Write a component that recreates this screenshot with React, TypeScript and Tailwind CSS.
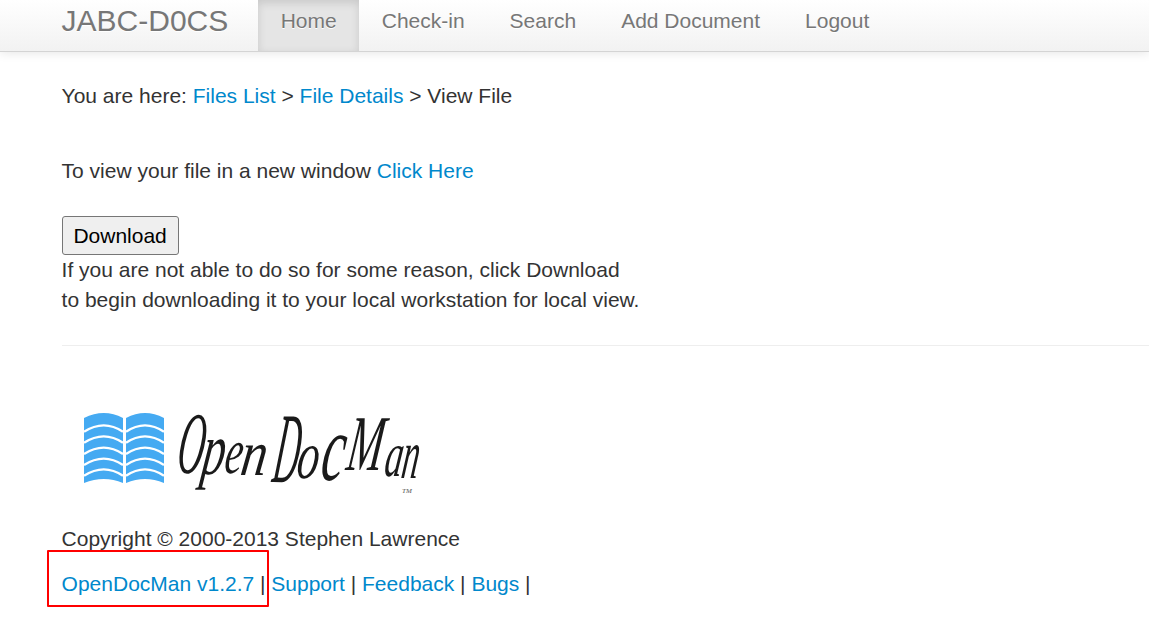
const letters: [string, number, number, number, number][] = [
  ["O", 113, 69, 0.37, 0.88],
  ["p", 138, 70, 0.46, 0.74],
  ["e", 161, 69, 0.4, 0.64],
  ["n", 177, 71, 0.52, 0.64],
  ["D", 209, 78, 0.35, 1.0],
  ["o", 233, 74, 0.44, 0.68],
  ["c", 257, 76, 0.52, 0.95],
  ["M", 283, 66, 0.43, 0.79],
  ["a", 321, 72, 0.36, 0.64],
  ["n", 338, 74, 0.34, 0.7],
];

export default function App() {
  const link = "text-[#0088cc]";
  const navItem = "px-[22.5px] leading-[42px] text-[#777777] [text-shadow:0_1px_0_#ffffff]";
  return (
    <div className="relative min-h-[619px] overflow-hidden bg-white font-['Liberation_Sans',Arial,sans-serif] text-[21px] leading-[29px] text-[#333333]">
      <nav className="flex h-[52px] border-b border-[#d4d4d4] bg-gradient-to-b from-white to-[#f2f2f2] pl-[61.6px] shadow-[0_1px_10px_rgba(0,0,0,0.1)]">
        <div className="mr-[29.9px] text-[30px] leading-[42px] text-[#777777] [text-shadow:0_1px_0_#ffffff]">JABC-D0CS</div>
        <div className={navItem + " h-[51px] bg-[#e5e5e5] text-[#555555] shadow-[inset_0_3px_8px_rgba(0,0,0,0.125)]"}>Home</div>
        <div className={navItem}>Check-in</div>
        <div className={navItem}>Search</div>
        <div className={navItem}>Add Document</div>
        <div className={navItem}>Logout</div>
      </nav>
      <main className="pl-[61.6px]">
        <p className="mt-[29px]">
          You are here: <a className={link}>Files List</a> &gt; <a className={link}>File Details</a> &gt; View File
        </p>
        <p className="mt-[46px]">
          To view your file in a new window <a className={link}>Click Here</a>
        </p>
        <button className="mt-[31px] block h-[39px] w-[117px] rounded-[3px] border border-[#767676] bg-[#efefef] text-[21px] leading-none text-black">
          Download
        </button>
        <p className="mt-0 leading-[30px]">
          If you are not able to do so for some reason, click Download
          <br />
          to begin downloading it to your local workstation for local view.
        </p>
        <hr className="mt-[30px] border-0 border-t border-[#eeeeee]" />
        <svg className="mt-[58px] block" width="370" height="106" viewBox="0 0 370 106">
          <path d="M22 14 Q42 4 61 14 L61 79 Q42 71 22 79 Z" fill="#45aaf2" />
          <path d="M64 14 Q83 4 102 14 L102 79 Q83 71 64 79 Z" fill="#45aaf2" />
          <g fill="none" stroke="#ffffff" strokeWidth="2.4">
            <path d="M22 27.7 Q42 15 61 27.7M22 38.7 Q42 26 61 38.7M22 50 Q42 37.3 61 50M22 61 Q42 48.3 61 61M22 71.7 Q42 59 61 71.7" />
            <path d="M64 27.7 Q83 15 102 27.7M64 38.7 Q83 26 102 38.7M64 50 Q83 37.3 102 50M64 61 Q83 48.3 102 61M64 71.7 Q83 59 102 71.7" />
          </g>
          <g fontFamily="'Liberation Serif',serif" fontStyle="italic" fontSize="100" fill="#1a1a1a">
            {letters.map(([ch, x, y, sx, sy], i) => (
              <text key={i} transform={`translate(${x} ${y}) skewX(-8) scale(${sx} ${sy})`}>{ch}</text>
            ))}
          </g>
          <text x="340" y="89" fontFamily="'Liberation Serif',serif" fontStyle="italic" fontSize="7" fill="#555555">TM</text>
        </svg>
        <p className="mt-[14px]">Copyright © 2000-2013 Stephen Lawrence</p>
        <p className="mt-[16px]">
          <a className={link}>OpenDocMan v1.2.7</a> | <a className={link}>Support</a> | <a className={link}>Feedback</a> | <a className={link}>Bugs</a> |
        </p>
      </main>
      <div className="absolute left-[47px] top-[550px] h-[57px] w-[222px] rounded-[1px] border-2 border-[#ff0000]" />
    </div>
  );
}
